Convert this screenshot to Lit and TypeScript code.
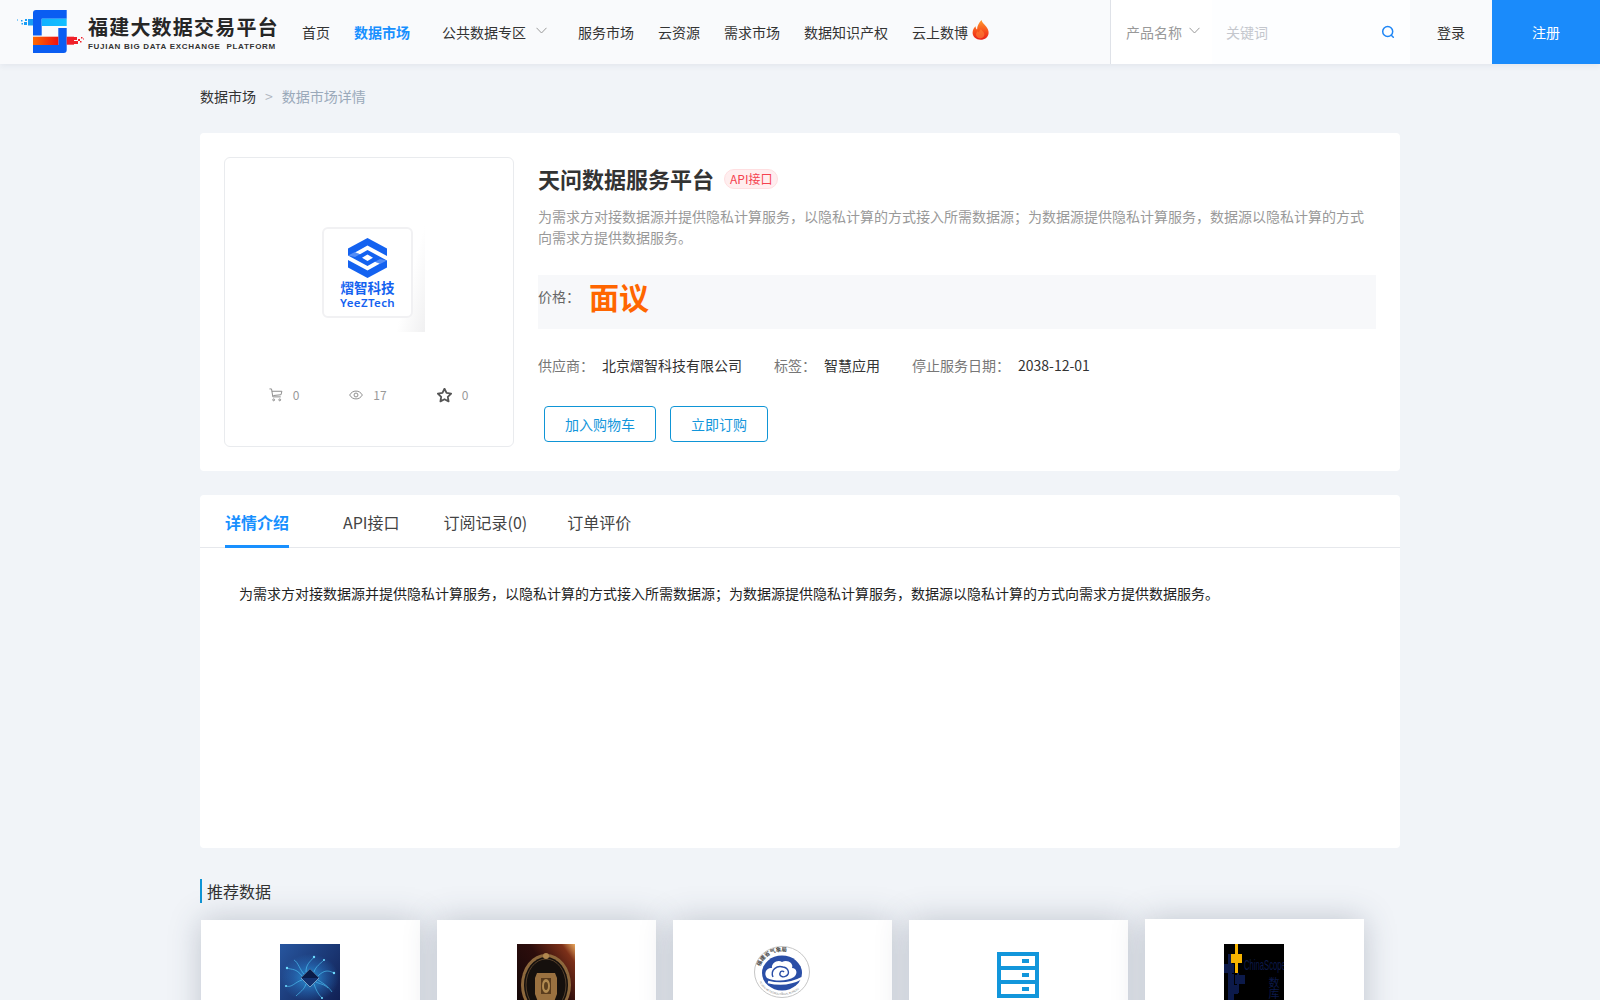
import { LitElement, html, css, svg } from 'lit';
import { customElement } from 'lit/decorators.js';

const chevron = html`<svg class="chev" viewBox="0 0 11 7" fill="none" stroke="currentColor" stroke-width="1"><path d="M.5.8 5.5 6l5-5.2"/></svg>`;

const brandMark = html`<svg class="mark" viewBox="0 0 70 44" width="70" height="44">
  <defs>
    <linearGradient id="cy" x1="0" x2="1"><stop offset="0" stop-color="#12b0ff"/><stop offset="1" stop-color="#12c0ff"/></linearGradient>
    <linearGradient id="or" x1="0" x2="1"><stop offset="0" stop-color="#ff6a00"/><stop offset="1" stop-color="#f01010"/></linearGradient>
  </defs>
  <path d="M20 0h30.700v8.700H25.700v16.800H17V3q0-3 3-3z" fill="#0a5df2"/>
  <rect x="25.700" y="8.700" width="25" height="7.300" fill="url(#cy)"/>
  <path d="M42.300 18h8.400v22q0 3-3 3H17v-8h25.300z" fill="#0a5df2"/>
  <rect x="17" y="26.700" width="25.300" height="8.300" fill="url(#or)"/>
  <path d="M50.700 26.700h7.300v8h-7.300z" fill="#f0202a"/>
  <g fill="#f0202a"><rect x="58" y="27" width="3" height="3"/><rect x="58" y="31" width="4" height="3"/><rect x="62" y="29" width="2" height="2"/><rect x="65" y="27" width="1.500" height="1.500"/><rect x="64" y="31" width="1.500" height="1.500"/><rect x="67" y="28.500" width="1" height="1"/></g>
  <g fill="#1a9df5"><rect x="12" y="9" width="5" height="6.500"/><rect x="8" y="12" width="3" height="3"/><rect x="9" y="9" width="2" height="2"/><rect x="5" y="10" width="1.500" height="1.500"/><rect x="5.500" y="13" width="1.500" height="1.500"/><rect x="1" y="9.500" width="1" height="1"/></g>
</svg>`;

const flame = html`<svg class="flame" viewBox="0 0 17 20" width="17" height="20">
  <defs><linearGradient id="fl" x1="0" x2="0" y1="0" y2="1"><stop offset="0" stop-color="#ff9a2e"/><stop offset=".55" stop-color="#f8521d"/><stop offset="1" stop-color="#e8201a"/></linearGradient></defs>
  <path d="M9.500 0c.6 3 3 4.200 4.800 6.700 1.500 2 2.400 4 2.300 6.200-.2 4-3.700 6.800-8 6.800-4.500 0-8-3-8-7 0-2.800 1.300-4.900 3-6.500 0 1.500.4 2.700 1.500 3.300C5 6 6.700 3.200 9.500 0z" fill="url(#fl)"/>
  <path d="M9 9c.4 1.500 3.400 2.800 3.400 5.600 0 2.300-1.800 3.900-4.100 3.900-2.400 0-4.300-1.700-4.300-3.900 0-1.700 1-2.700 2-3.500.2.800.5 1.200 1.100 1.400C7 11 8 10.200 9 9z" fill="#ff8a3c" opacity=".55"/>
</svg>`;

const searchIcon = html`<svg class="search" viewBox="0 0 14 14" width="14" height="14" fill="none" stroke="#1f86f5" stroke-width="1.500"><circle cx="6.700" cy="6.500" r="5"/><path d="m10.300 10.200 2 2" stroke-linecap="round"/></svg>`;

const cartIcon = html`<svg viewBox="0 0 15 15" width="14" height="14" fill="none" stroke="#888" stroke-width="1"><path d="M.5 1h2.200l1.400 8.500h8.500M3.100 3.500h10.700l-.9 3.700-8.300.9"/><circle cx="5" cy="12.700" r="1"/><circle cx="11.500" cy="12.700" r="1"/></svg>`;
const eyeIcon = html`<svg viewBox="0 0 15 15" width="14" height="14" fill="none" stroke="#888" stroke-width="1"><path d="M.7 7.500C2.300 4.700 4.700 3.300 7.500 3.300s5.200 1.400 6.800 4.200c-1.600 2.800-4 4.200-6.800 4.200S2.300 10.300.7 7.500z"/><circle cx="7.500" cy="7.500" r="2.100"/></svg>`;
const starIcon = html`<svg viewBox="0.500 0.500 14 14" width="15" height="15" fill="none" stroke="#555" stroke-width="1.700" stroke-linejoin="round"><path d="m7.500 1.200 1.900 3.900 4.300.6-3.100 3 .7 4.300-3.800-2-3.800 2 .7-4.300-3.100-3 4.300-.6z"/></svg>`;

const yeezHex = html`<svg class="hex" viewBox="0 0 40 40" width="40" height="40">
  <path fill="#1462f0" d="M19.500 0 39 10.500v19L19.500 40 0 29.500v-19z"/>
  <path fill="#fff" d="M7 14.500 19.500 7.500 39 18v4.500L19.500 12 12 16.200z"/>
  <path fill="#fff" d="M32 25.500 19.500 32.500 0 22v-4.500L19.500 28 27 23.800z"/>
  <path fill="#fff" d="M19.500 16.600 25 19.800l-5.500 3.100L14 19.800z"/>
  <path fill="#6f9ff8" d="m0 17.500 7-3.500 5 2.200L7 19z" opacity=".7"/>
  <path fill="#6f9ff8" d="M39 22.500 32 26l-5-2.200 5-2.800z" opacity=".7"/>
</svg>`;

const thumbs = [
  svg`<svg class="thumb" viewBox="0 0 60 80" width="60" height="80">
    <defs><linearGradient id="t1" x1="0" y1="0" x2="1" y2="1"><stop offset="0" stop-color="#27569f"/><stop offset="1" stop-color="#0d1646"/></linearGradient>
    <radialGradient id="t1g"><stop offset="0" stop-color="#2fb4f5" stop-opacity=".8"/><stop offset=".6" stop-color="#2a86d8" stop-opacity=".35"/><stop offset="1" stop-color="#2a86d8" stop-opacity="0"/></radialGradient></defs>
    <rect width="60" height="80" fill="url(#t1)"/><ellipse cx="30" cy="34" rx="29" ry="24" fill="url(#t1g)"/>
    <g stroke="#52cdfb" stroke-width=".6" fill="none"><path d="M22 32C16 24 12 26 7 24M22 36C15 38 12 44 6 42M38 32C44 26 48 26 54 29M38 36C44 40 48 42 52 48M26 28C26 20 30 18 34 13M34 28C36 22 40 20 44 16M26 40C24 46 20 48 16 52M34 40C36 46 38 50 42 54M24 30C20 26 18 18 14 16M36 38c4 2 8 2 12 6"/></g>
    <g fill="#6fdcff"><circle cx="7" cy="24" r="1.200"/><circle cx="54" cy="29" r="1.200"/><circle cx="34" cy="13" r="1.200"/><circle cx="44" cy="16" r="1"/><circle cx="6" cy="42" r="1"/><circle cx="42" cy="54" r="1"/></g>
    <path d="M30 25 39 34 30 43 21 34z" fill="#15336f" stroke="#d0f2ff" stroke-width=".5"/><path d="M30 25 39 34H21z" fill="#0a1c48"/></svg>`,
  svg`<svg class="thumb" viewBox="0 0 58 80" width="58" height="80">
    <defs><linearGradient id="t2" x1="0" y1="1" x2="1" y2="0"><stop offset="0" stop-color="#0c0606"/><stop offset=".6" stop-color="#2c0d0c"/><stop offset=".88" stop-color="#7c3019"/><stop offset="1" stop-color="#eaa95e"/></linearGradient></defs>
    <rect width="58" height="80" fill="url(#t2)"/><ellipse cx="29" cy="41" rx="25" ry="31" fill="#8d683c"/><ellipse cx="29" cy="41" rx="22" ry="28" fill="#15100d"/><ellipse cx="29" cy="41" rx="20" ry="26" fill="none" stroke="#56402a"/>
    <circle cx="29" cy="12" r="3" fill="#b1874f"/>
    <path d="M20 29h18l2 5v16l-3 8H21l-3-8V34z" fill="#9a7140"/><path d="M24 34h10v16H24z" fill="#5a3c1d"/><ellipse cx="29" cy="42" rx="4" ry="7" fill="#b18a50"/><ellipse cx="29" cy="42" rx="2" ry="4" fill="#5c3f1e"/></svg>`,
  svg`<svg class="thumb" viewBox="0 0 56 52" width="56" height="52">
    <defs><path id="arc" d="M5.500 26a22.500 20.500 0 0 1 45 0"/><path id="arcb" d="M4 29a24 20 0 0 0 48 0"/></defs>
    <ellipse cx="28" cy="26" rx="27.500" ry="25.500" fill="#fff" stroke="#c6c6c6"/>
    <text font-family="Noto Sans CJK SC" font-size="5.500" font-weight="700" fill="#444"><textPath href="#arc" startOffset="8%">福建省气象局</textPath></text>
    <text font-family="Liberation Sans" font-size="2.600" fill="#777"><textPath href="#arcb" startOffset="10%">FUJIAN METEOROLOGICAL BUREAU</textPath></text>
    <ellipse cx="28" cy="27" rx="20" ry="17.500" fill="#2a4ea6"/>
    <path d="M13 32c-4-5 0-11 5-10-1-5 6-9 10-6 5-3 12 1 10 6 5 0 6 6 2 9-6 4-18 5-27 1z" fill="#fff"/>
    <path d="M19 31c-3-7 4-12 10-10 6 1 7 7 3 9-3 2-7 0-6-3 .5-2 3-2.500 4-1" fill="none" stroke="#2a4ea6" stroke-width="1.400"/>
    <path d="M14 36c10 2.500 22 2.500 34-4" fill="none" stroke="#fff" stroke-width="2.500"/></svg>`,
  svg`<svg class="thumb" viewBox="0 0 42 46" width="42" height="46">
    <rect width="42" height="46" fill="#1296db"/>
    <g fill="#fff"><rect x="4" y="4" width="34" height="10"/><rect x="4" y="18" width="34" height="10"/><rect x="4" y="32" width="34" height="10"/></g>
    <g fill="#1296db"><rect x="25" y="7" width="7" height="4"/><rect x="25" y="21" width="7" height="4"/><rect x="25" y="35" width="7" height="4"/></g></svg>`,
  svg`<svg class="thumb" viewBox="0 0 60 80" width="60" height="80">
    <rect width="60" height="80" fill="#000"/>
    <g fill="#0c1a4a"><rect x="4" y="10" width="4" height="60"/><rect x="0" y="20" width="10" height="9"/><rect x="8" y="30" width="2" height="40"/><rect x="4" y="31" width="6" height="9"/><rect x="11" y="31" width="10" height="9"/><rect x="4" y="41" width="10" height="9"/><rect x="13" y="29" width="2" height="20"/></g>
    <rect x="11" y="0" width="3" height="29" fill="#f6b300"/><rect x="7" y="10" width="11" height="9" fill="#f6b300"/>
    <g fill="#0c1a4a"><text transform="translate(20 26) scale(1.100 2)" font-family="Liberation Sans" font-size="7">ChinaScope</text>
    <text x="50" y="33" writing-mode="vertical-rl" font-family="Noto Sans CJK SC" font-size="11">数库</text></g></svg>`,
];

const navItems = ['服务市场', '云资源', '需求市场', '数据知识产权'];

@customElement('app-root')
export class AppRoot extends LitElement {
  static styles = css`
    :host { display: block; min-height: 1000px; background: #f1f4f8; color: #333; font-family: "Noto Sans CJK SC", "Noto Sans", sans-serif; font-size: 14px; }
    header { height: 64px; display: flex; background: #f9fafc; box-shadow: 0 2px 6px rgba(40, 60, 100, .07); position: relative; z-index: 2; line-height: 22px; }
    .brand { width: 302px; padding-left: 16px; box-sizing: border-box; display: flex; flex: none; }
    .mark { margin-top: 10px; flex: none; }
    .brand-text { margin: 12px 0 0 2px; white-space: nowrap; }
    .brand-cn { font-size: 20px; line-height: 30px; font-weight: 700; letter-spacing: 1.200px; color: #262626; }
    .brand-en { font-family: "Liberation Sans", sans-serif; font-size: 8px; line-height: 9px; font-weight: 700; letter-spacing: .700px; color: #333; white-space: pre; }
    nav { display: flex; align-items: center; gap: 24px; color: #333; flex: none; }
    nav .active { color: #1890ff; font-weight: 700; }
    .drop { display: flex; align-items: center; margin: 0 7px 0 8px; }
    .chev { width: 11px; height: 7px; margin-left: 10px; color: #999; margin-top: -3px; }
    .hot { display: flex; align-items: center; }
    .flame { margin: -5px 0 0 4px; }
    .tools { margin-left: auto; display: flex; flex: none; }
    .select { width: 102px; box-sizing: border-box; padding-left: 15px; display: flex; align-items: center; background: #fff; border-left: 1px solid #dfe2e8; color: #999; }
    .select .chev { margin-left: 7px; }
    .input { width: 198px; box-sizing: border-box; padding: 0 15px 0 14px; display: flex; align-items: center; justify-content: space-between; background: #fdfeff; color: #c4c7cd; }
    .login { width: 82px; display: flex; align-items: center; justify-content: center; color: #333; }
    .register { width: 108px; display: flex; align-items: center; justify-content: center; background: #1a8bfb; color: #fff; }

    main { width: 1200px; margin: 0 auto; padding-top: 21px; }
    .crumbs { display: flex; line-height: 22px; color: #9aa9ba; }
    .crumbs b { font-weight: 400; color: #333; }
    .crumbs i { font-style: normal; margin: 0 9px; color: #b0b6c0; }
    .card { background: #fff; border-radius: 4px; }
    .product { margin-top: 26px; padding: 24px; display: flex; gap: 24px; }
    .cover { width: 290px; height: 290px; box-sizing: border-box; flex: none; border: 1px solid #e9ebee; border-radius: 6px; display: flex; flex-direction: column; align-items: center; padding-top: 64px; }
    .shot { width: 103px; height: 110px; box-sizing: border-box; margin-left: 9px; padding-top: 5px; background: linear-gradient(105deg, #fff 78%, #f0f0f1 100%); }
    .tile { width: 91px; height: 91px; box-sizing: border-box; background: #fff; border: 2px solid #f1f1f3; border-radius: 6px; display: flex; flex-direction: column; align-items: center; padding-top: 9px; color: #1462f0; font-weight: 700; }
    .hex { flex: none; }
    .tile-cn { font-size: 13.500px; line-height: 17px; margin-top: 1px; white-space: nowrap; }
    .tile-en { font-family: "Noto Sans", sans-serif; font-size: 11.500px; line-height: 13px; font-weight: 600; letter-spacing: .4px; white-space: nowrap; }
    .stats { display: flex; gap: 50px; margin: 53px 0 0 -1px; color: #999; font-size: 12px; line-height: 20px; }
    .stats div { display: flex; align-items: center; gap: 10px; }
    .info { flex: 1; min-width: 0; }
    .title { display: flex; align-items: center; height: 44px; }
    h1 { margin: -2px 0 0; font-size: 22px; line-height: 44px; font-weight: 700; color: #333; }
    .badge { margin-left: 10px; height: 20px; box-sizing: border-box; padding: 0 5px; border: 1px solid #ffdfe1; border-radius: 10px; background: #ffeeef; color: #f5424f; font-size: 12px; line-height: 18px; }
    .desc { margin: 5px 0 0; line-height: 21px; color: #999; }
    .price { margin-top: 27px; height: 54px; box-sizing: border-box; padding-bottom: 12px; display: flex; align-items: center; background: #f7f8fa; color: #666; }
    .price strong { margin-left: 9px; font-size: 30px; line-height: 44px; color: #ff6600; font-weight: 700; }
    .meta { margin-top: 25px; display: flex; gap: 32px; line-height: 22px; color: #777; }
    .meta span { color: #333; margin-left: 8px; }
    .actions { margin: 30px 0 0 6px; display: flex; gap: 14px; }
    .actions a { height: 36px; box-sizing: border-box; padding: 0 20px; border: 1px solid #0f95d6; border-radius: 4px; line-height: 34px; color: #1296db; }

    .detail { margin-top: 24px; height: 353px; }
    .tabs { height: 53px; box-sizing: border-box; padding-left: 25px; display: flex; border-bottom: 1px solid #e6e8ec; font-size: 16px; line-height: 55px; color: #444; }
    .tabs div { height: 53px; box-sizing: border-box; flex: none; }
    .tabs .on { color: #1890ff; font-weight: 700; border-bottom: 3px solid #1890ff; margin-right: 54px; }
    .tabs .api { margin-right: 44px; }
    .tabs .sub { margin-right: 40px; }
    .detail p { margin: 34px 0 0 39px; line-height: 22px; color: #222; }

    h2 { margin: 31px 0 0; height: 24px; border-left: 2px solid #0f95d6; padding-left: 5px; font-size: 16px; font-weight: 400; line-height: 24px; color: #333; }
    .recs { margin: 17px 0 0 1px; padding-bottom: 40px; display: flex; align-items: flex-start; gap: 17.500px; }
    .rec { width: 218.500px; height: 240px; flex: none; box-sizing: border-box; display: flex; justify-content: center; align-items: flex-start; padding-top: 24px; background: #fff; box-shadow: 0 0 30px rgba(50, 60, 90, .26); }
    .rec.s3 { padding-top: 26px; }
    .rec.s4 { padding-top: 32px; }
    .rec.s5 { margin-top: -1px; padding-top: 25px; }
    .thumb { display: block; flex: none; }
  `;

  render() {
    return html`
      <header>
        <div class="brand">
          ${brandMark}
          <div class="brand-text">
            <div class="brand-cn">福建大数据交易平台</div>
            <div class="brand-en">FUJIAN BIG DATA EXCHANGE  PLATFORM</div>
          </div>
        </div>
        <nav>
          <a>首页</a>
          <a class="active">数据市场</a>
          <a class="drop">公共数据专区${chevron}</a>
          ${navItems.map((n) => html`<a>${n}</a>`)}
          <a class="hot">云上数博${flame}</a>
        </nav>
        <div class="tools">
          <div class="select">产品名称${chevron}</div>
          <div class="input"><span>关键词</span>${searchIcon}</div>
          <a class="login">登录</a>
          <a class="register">注册</a>
        </div>
      </header>
      <main>
        <div class="crumbs"><b>数据市场</b><i>&gt;</i><span>数据市场详情</span></div>
        <section class="card product">
          <div class="cover">
            <div class="shot">
              <div class="tile">
                ${yeezHex}
                <div class="tile-cn">熠智科技</div>
                <div class="tile-en">YeeZTech</div>
              </div>
            </div>
            <div class="stats">
              <div>${cartIcon}<span>0</span></div>
              <div>${eyeIcon}<span>17</span></div>
              <div>${starIcon}<span>0</span></div>
            </div>
          </div>
          <div class="info">
            <div class="title"><h1>天问数据服务平台</h1><span class="badge">API接口</span></div>
            <p class="desc">为需求方对接数据源并提供隐私计算服务，以隐私计算的方式接入所需数据源；为数据源提供隐私计算服务，数据源以隐私计算的方式向需求方提供数据服务。</p>
            <div class="price">价格：<strong>面议</strong></div>
            <div class="meta">
              <div>供应商：<span>北京熠智科技有限公司</span></div>
              <div>标签：<span>智慧应用</span></div>
              <div>停止服务日期：<span>2038-12-01</span></div>
            </div>
            <div class="actions"><a>加入购物车</a><a>立即订购</a></div>
          </div>
        </section>
        <section class="card detail">
          <div class="tabs">
            <div class="on">详情介绍</div>
            <div class="api">API接口</div>
            <div class="sub">订阅记录(0)</div>
            <div>订单评价</div>
          </div>
          <p>为需求方对接数据源并提供隐私计算服务，以隐私计算的方式接入所需数据源；为数据源提供隐私计算服务，数据源以隐私计算的方式向需求方提供数据服务。</p>
        </section>
        <h2>推荐数据</h2>
        <div class="recs">
          <div class="rec">${thumbs[0]}</div>
          <div class="rec">${thumbs[1]}</div>
          <div class="rec s3">${thumbs[2]}</div>
          <div class="rec s4">${thumbs[3]}</div>
          <div class="rec s5">${thumbs[4]}</div>
        </div>
      </main>
    `;
  }
}
